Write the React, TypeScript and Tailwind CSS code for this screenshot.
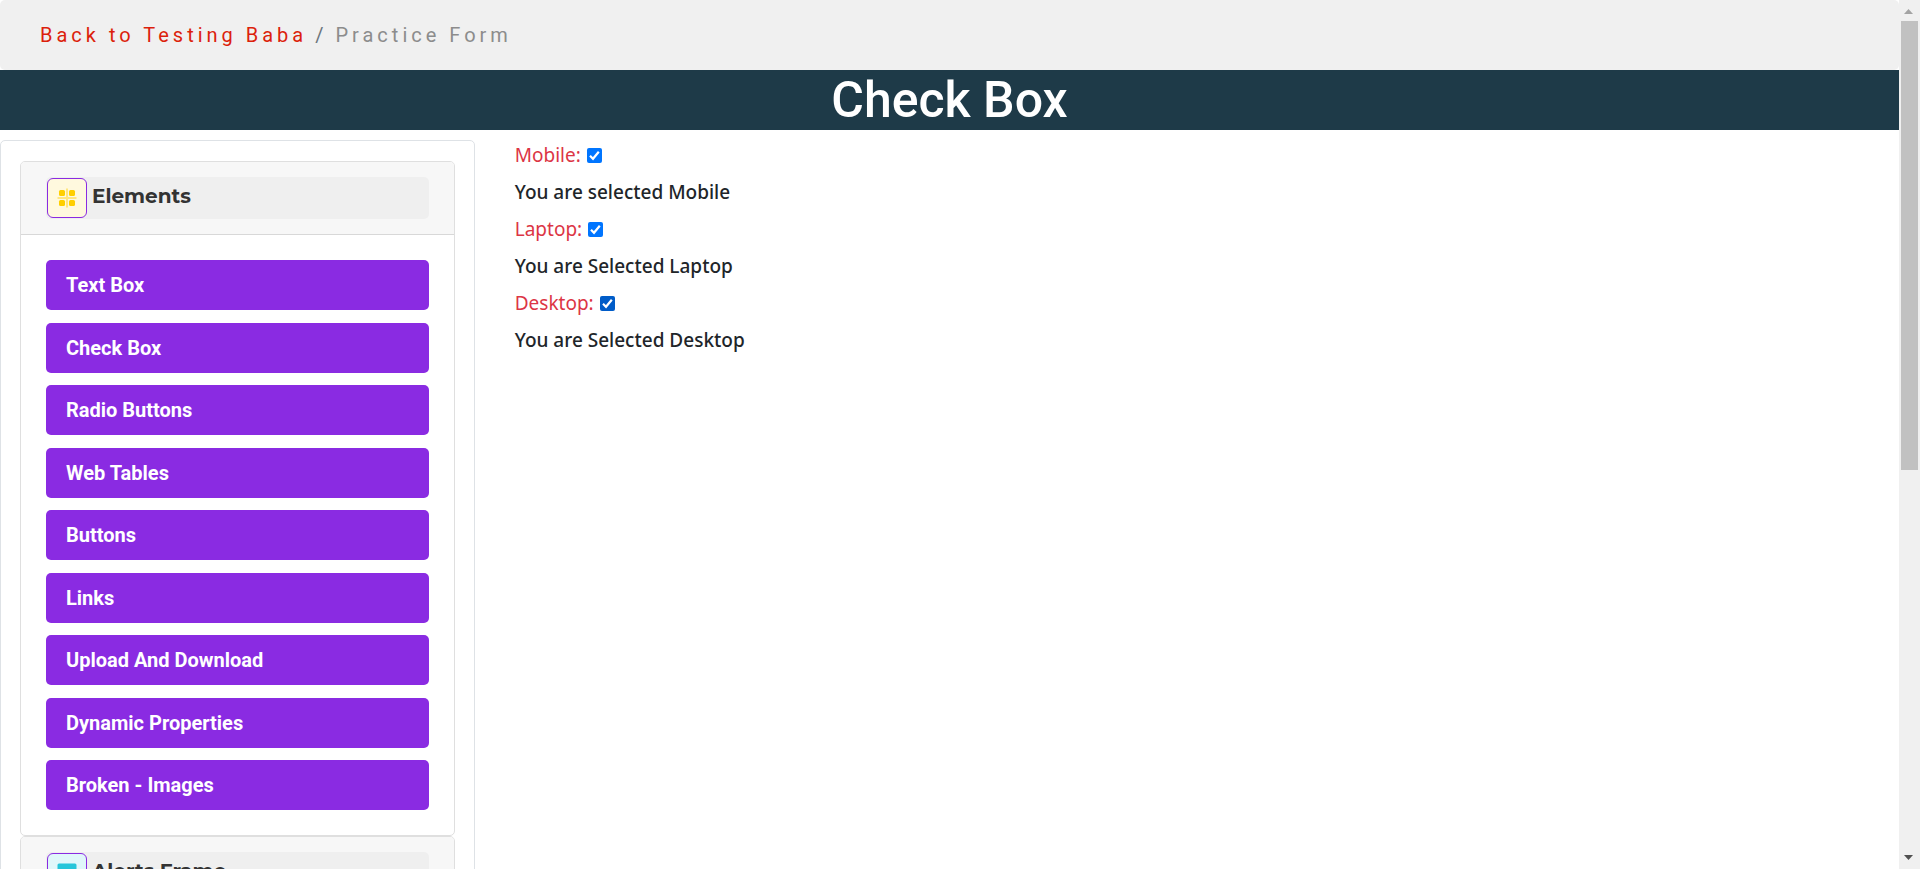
import { useState } from "react";
import type { ReactNode } from "react";

const elementLinks = [
  "Text Box",
  "Check Box",
  "Radio Buttons",
  "Web Tables",
  "Buttons",
  "Links",
  "Upload And Download",
  "Dynamic Properties",
  "Broken - Images",
];

const devices = [
  { id: "mobile", label: "Mobile:", message: "You are selected Mobile", tint: "bg-[#0075ff]" },
  { id: "laptop", label: "Laptop:", message: "You are Selected Laptop", tint: "bg-[#0075ff]" },
  { id: "desktop", label: "Desktop:", message: "You are Selected Desktop", tint: "bg-[#005cc8]" },
];

function GridIcon() {
  return (
    <svg viewBox="0 0 20 20" className="size-5" aria-hidden="true">
      <path d="M10 .5v19M.5 10h19" stroke="#ffe680" strokeWidth="2" fill="none" />
      <g fill="#ffcf00">
        <rect x="2" y="2" width="6" height="6" rx="1.5" />
        <rect x="12" y="2" width="6" height="6" rx="1.5" />
        <rect x="2" y="12" width="6" height="6" rx="1.5" />
        <rect x="12" y="12" width="6" height="6" rx="1.5" />
      </g>
    </svg>
  );
}

function WindowIcon() {
  return (
    <svg viewBox="0 0 20 20" className="size-5" aria-hidden="true">
      <path d="M2 .5h16a1.500 1.500 0 0 1 1.500 1.500v4H.5V2A1.500 1.500 0 0 1 2 .5z" fill="#26c6da" />
      <path d="M.5 8h19v9a2 2 0 0 1-2 2h-15a2 2 0 0 1-2-2z" fill="#80deea" />
    </svg>
  );
}

function Section({ title, icon, tint, children }: { title: string; icon: ReactNode; tint: string; children?: ReactNode }) {
  return (
    <section className="overflow-hidden rounded-[5px] border border-[#dfdfdf] bg-white">
      <h2 className="border-b border-[#d8d8d8] bg-[#f7f7f7] px-[25px] py-[15px]">
        <button type="button" className="flex w-full items-start gap-[5px] rounded-[5px] bg-[#efefef] p-px text-left">
          <span className={`flex size-10 shrink-0 items-center justify-center rounded-md border border-[#8a2be2] ${tint}`}>
            {icon}
          </span>
          <span className="font-['Montserrat','Inter',sans-serif] text-xl leading-9 font-bold text-[#333]">{title}</span>
        </button>
      </h2>
      {children}
    </section>
  );
}

function DeviceOption({ id, label, message, tint }: (typeof devices)[number]) {
  const [checked, setChecked] = useState(true);
  return (
    <div>
      <div className="mb-[7px] flex h-[30px] items-center gap-1.5">
        <label htmlFor={id} className="text-[#dc3545]">{label}</label>
        <span className="grid size-[15px]">
          <input
            id={id}
            type="checkbox"
            checked={checked}
            onChange={(e) => setChecked(e.target.checked)}
            className={`col-start-1 row-start-1 size-[15px] appearance-none rounded-xs ${checked ? tint : "border border-gray-500 bg-white"}`}
          />
          {checked && (
            <svg viewBox="0 0 15 15" className="pointer-events-none col-start-1 row-start-1 size-[15px]" aria-hidden="true">
              <path d="M3 7.800l3 3L11.800 3.800" fill="none" stroke="#fff" strokeWidth="2.200" />
            </svg>
          )}
        </span>
      </div>
      <p className="mb-[7px] h-[30px] font-medium text-[#212529]">{checked ? message : ""}</p>
    </div>
  );
}

function ScrollTrack() {
  return (
    <div className="flex w-[21px] shrink-0 flex-col items-center bg-[#f0f0f0]" aria-hidden="true">
      <svg viewBox="0 0 21 21" className="size-[21px] shrink-0">
        <path d="M5 14l4.500-5L14 14z" fill="#a3a3a3" />
      </svg>
      <div className="flex w-full grow flex-col px-0.5">
        <div className="h-[54.3%] bg-[#c1c1c1]" />
      </div>
      <svg viewBox="0 0 21 21" className="size-[21px] shrink-0">
        <path d="M5 7h9l-4.500 5z" fill="#505050" />
      </svg>
    </div>
  );
}

export default function App() {
  return (
    <div className="flex h-screen overflow-hidden bg-white font-['Roboto',sans-serif] text-xl">
      <div className="min-w-0 grow overflow-hidden">
        <nav aria-label="Breadcrumb" className="rounded-[5px] bg-[#f0f0f0] px-10 py-5 leading-[30px] tracking-[4px]">
          <ol className="flex gap-2">
            <li><a href="#home" className="text-[#dc1f0c]">Back to Testing Baba</a></li>
            <li className="text-[#6c757d]">/</li>
            <li className="text-[#8c8c8c]">Practice Form</li>
          </ol>
        </nav>
        <h1 className="bg-[#1e3a48] text-center text-[50px] leading-[60px] font-medium text-white">Check Box</h1>
        <div className="flex items-start pt-2.5">
          <aside className="w-1/4 shrink-0 rounded-[5px] border border-[#dee2e6] px-[19px] py-5">
            <Section title="Elements" icon={<GridIcon />} tint="bg-[#fff9de]">
              <ul className="flex h-[600px] flex-col justify-between p-[25px]">
                {elementLinks.map((name) => (
                  <li key={name}>
                    <a href="#practice" className="block rounded-[5px] bg-[#8a2be2] px-5 py-2.5 leading-[30px] font-bold text-white">{name}</a>
                  </li>
                ))}
              </ul>
            </Section>
            <Section title="Alerts Frame" icon={<WindowIcon />} tint="bg-[#e0f7fa]" />
          </aside>
          <main className="grow px-10 font-['Segoe_UI','Noto_Sans',sans-serif] text-[19px] leading-[30px]">
            {devices.map((device) => (
              <DeviceOption key={device.id} {...device} />
            ))}
          </main>
        </div>
      </div>
      <ScrollTrack />
    </div>
  );
}
